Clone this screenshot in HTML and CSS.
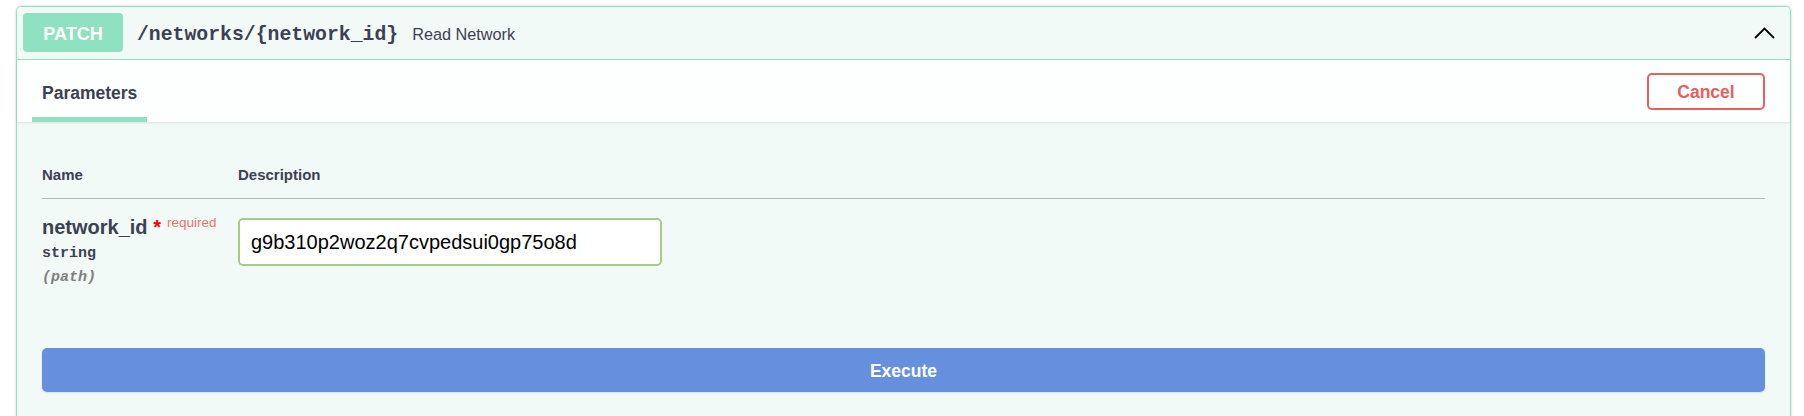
FILE: index.html
```html
<!DOCTYPE html>
<html lang="en">
<head>
<meta charset="utf-8">
<title>PATCH /networks/{network_id}</title>
<link rel="stylesheet" href="styles.css">
</head>
<body>
<div class="opblock">
  <div class="summary">
    <span class="method">PATCH</span>
    <span class="path">/networks/{network_id}</span>
    <span class="summary-desc">Read Network</span>
    <svg class="arrow" width="21" height="12" viewBox="0 0 21 12" aria-hidden="true"><polyline points="1,11 10.5,1.5 20,11" fill="none" stroke="#000" stroke-width="1.8"/></svg>
  </div>
  <div class="section-header">
    <h4 class="tab">Parameters</h4>
    <button class="btn-cancel">Cancel</button>
  </div>
  <div class="params">
    <div class="table-head">
      <div>Name</div>
      <div>Description</div>
    </div>
    <div class="param-row">
      <div class="col-name">
        <div class="pname">network_id<span class="star">&nbsp;*</span><span class="req">required</span></div>
        <div class="ptype">string</div>
        <div class="pin">(path)</div>
      </div>
      <div class="col-desc">
        <input class="pinput" type="text" value="g9b310p2woz2q7cvpedsui0gp75o8d">
      </div>
    </div>
    <div class="execute-wrap">
      <button class="btn-execute">Execute</button>
    </div>
  </div>
</div>
</body>
</html>
```

FILE: styles.css
```css
* { box-sizing: border-box; }

body {
  margin: 0;
  padding: 6px 13px 0 16px;
  background: #fff;
  font-family: "Liberation Sans", Arial, sans-serif;
  color: #3b4151;
}

.opblock {
  border: 1px solid #8fe3c2;
  border-radius: 5px;
  background: #f1faf6;
  box-shadow: 0 0 3px rgba(0, 0, 0, .19);
  padding-bottom: 40px;
}

.summary {
  display: flex;
  align-items: center;
  padding: 6px 15px 7px 6px;
  border-bottom: 1px solid #8fe3c2;
  background: #f2faf7;
  border-radius: 4px 4px 0 0;
}

.method {
  width: 100px;
  height: 39px;
  display: flex;
  align-items: center;
  justify-content: center;
  padding-top: 4px;
  background: #8ee2c1;
  color: #fff;
  font-weight: 700;
  font-size: 18px;
  border-radius: 4px;
}

.path {
  margin-left: 14px;
  padding-top: 4px;
  font-family: "Liberation Mono", "Courier New", monospace;
  font-weight: 700;
  font-size: 19.8px;
  color: #3b4151;
}

.summary-desc {
  margin-left: 14px;
  padding-top: 4px;
  font-size: 16.25px;
  color: #3b4151;
}

.arrow {
  margin-left: auto;
  display: block;
}

.section-header {
  display: flex;
  align-items: center;
  justify-content: space-between;
  padding: 0 25px 0 15px;
  background: #fdfefe;
  box-shadow: 0 1px 2px rgba(0, 0, 0, .1);
}

.tab {
  margin: 0;
  padding: 23px 10px 14px;
  line-height: 20px;
  font-size: 17.5px;
  font-weight: 700;
  color: #3b4151;
  border-bottom: 5px solid #8ee2c1;
}

.btn-cancel {
  width: 118px;
  height: 37px;
  padding: 3px 0 0;
  border: 2px solid #e46060;
  border-radius: 5px;
  background: transparent;
  color: #e46060;
  font-family: "Liberation Sans", Arial, sans-serif;
  font-weight: 700;
  font-size: 17.5px;
}

.params {
  padding: 29px 25px 0;
}

.table-head {
  display: grid;
  grid-template-columns: 196px 1fr;
  padding: 15px 0;
  line-height: 17px;
  font-size: 15px;
  font-weight: 700;
  color: #3b4151;
  border-bottom: 1px solid #b3b7ba;
}

.param-row {
  display: grid;
  grid-template-columns: 196px 1fr;
  padding-top: 12px;
}

.pname {
  margin-top: 4px;
  line-height: 24px;
  font-size: 20px;
  font-weight: 700;
  color: #3b4151;
  white-space: nowrap;
}

.star {
  color: red;
}

.req {
  padding: 0 6px;
  font-size: 13.5px;
  font-weight: 400;
  line-height: 1;
  vertical-align: 7.5px;
  color: rgba(255, 0, 0, .6);
}

.ptype {
  padding: 6px 0 4px;
  line-height: 18px;
  font-family: "Liberation Mono", "Courier New", monospace;
  font-weight: 700;
  font-size: 15px;
  color: #3b4151;
}

.pin {
  padding-top: 2px;
  line-height: 18px;
  font-family: "Liberation Mono", "Courier New", monospace;
  font-weight: 700;
  font-style: italic;
  font-size: 15px;
  color: #808080;
}

.pinput {
  display: block;
  margin-top: 7px;
  width: 424px;
  height: 48px;
  padding: 0 11px;
  border: 2px solid #a7cb83;
  border-radius: 5px;
  background: #fff;
  font-family: "Liberation Sans", Arial, sans-serif;
  font-size: 20px;
  color: #000;
  outline: none;
}

.execute-wrap {
  padding-top: 61px;
}

.btn-execute {
  display: block;
  width: 100%;
  height: 44px;
  padding: 3px 0 0;
  border: none;
  border-radius: 5px;
  background: #6690de;
  box-shadow: 0 1px 2px rgba(0, 0, 0, .1);
  color: #fff;
  font-family: "Liberation Sans", Arial, sans-serif;
  font-weight: 700;
  font-size: 17.5px;
}
```
